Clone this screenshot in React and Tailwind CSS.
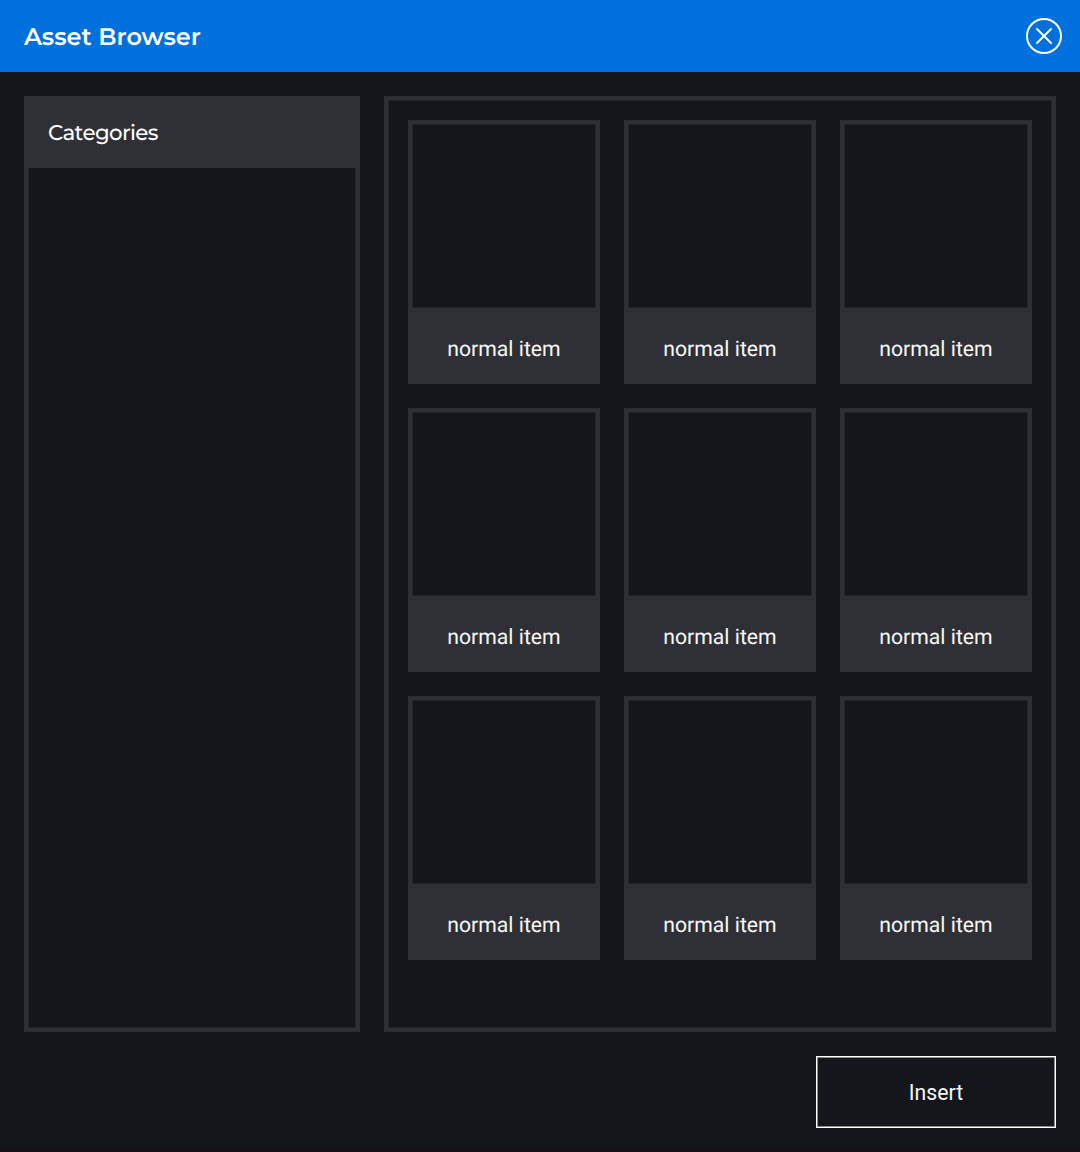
import React from "react";

const items = Array.from({ length: 9 }, () => "normal item");

function AssetCard({ label }) {
  return (
    <div className="h-[264px] w-[192px] bg-[#2f3035] p-1">
      <div className="h-[184px] w-[184px] border border-[#212429] bg-[#13171b]" />
      <div className="flex h-[72px] items-center justify-center pt-[11px] font-['Roboto',sans-serif] text-[21.2px] leading-6 text-[#f8f8f9]">
        {label}
      </div>
    </div>
  );
}

export default function App() {
  return (
    <div className="flex h-[1152px] w-[1080px] flex-col border-b-4 border-[#16101a] bg-[#13171b] text-white [text-rendering:geometricPrecision]">
      <header className="flex h-[72px] shrink-0 items-center justify-between bg-[#0070dd] pr-[18px] pl-6 font-['Montserrat','Inter',sans-serif]">
        <h1 className="pt-[3px] text-2xl font-semibold">Asset Browser</h1>
        <button aria-label="Close">
          <svg className="block size-9" viewBox="0 0 36 36" fill="none" stroke="white" strokeWidth="2" strokeLinecap="round">
            <circle cx="18" cy="18" r="17" />
            <path d="M11 11 25 25M25 11 11 25" />
          </svg>
        </button>
      </header>
      <main className="flex gap-6 px-6 pt-6">
        <aside className="h-[936px] w-[336px] border-4 border-[#2f3035] shadow-[inset_0_0_0_1px_#212429]">
          <h2 className="flex h-[68px] items-center bg-[#2f3035] pb-px pl-5 font-['Montserrat','Inter',sans-serif] text-[21.33px] font-medium tracking-[-0.6px]">Categories</h2>
        </aside>
        <section className="h-[936px] w-[672px] border-4 border-[#2f3035] p-5 shadow-[inset_0_0_0_1px_#212429]">
          <div className="grid grid-cols-3 gap-6">
            {items.map((label, i) => <AssetCard key={i} label={label} />)}
          </div>
        </section>
      </main>
      <footer className="flex justify-end px-6 pt-6">
        <button className="h-[72px] w-[240px] border border-white pt-0.5 font-['Roboto',sans-serif] text-[21.2px] text-[#f8f8f9] shadow-[inset_0_0_0_1px_#898b8d]">Insert</button>
      </footer>
    </div>
  );
}
